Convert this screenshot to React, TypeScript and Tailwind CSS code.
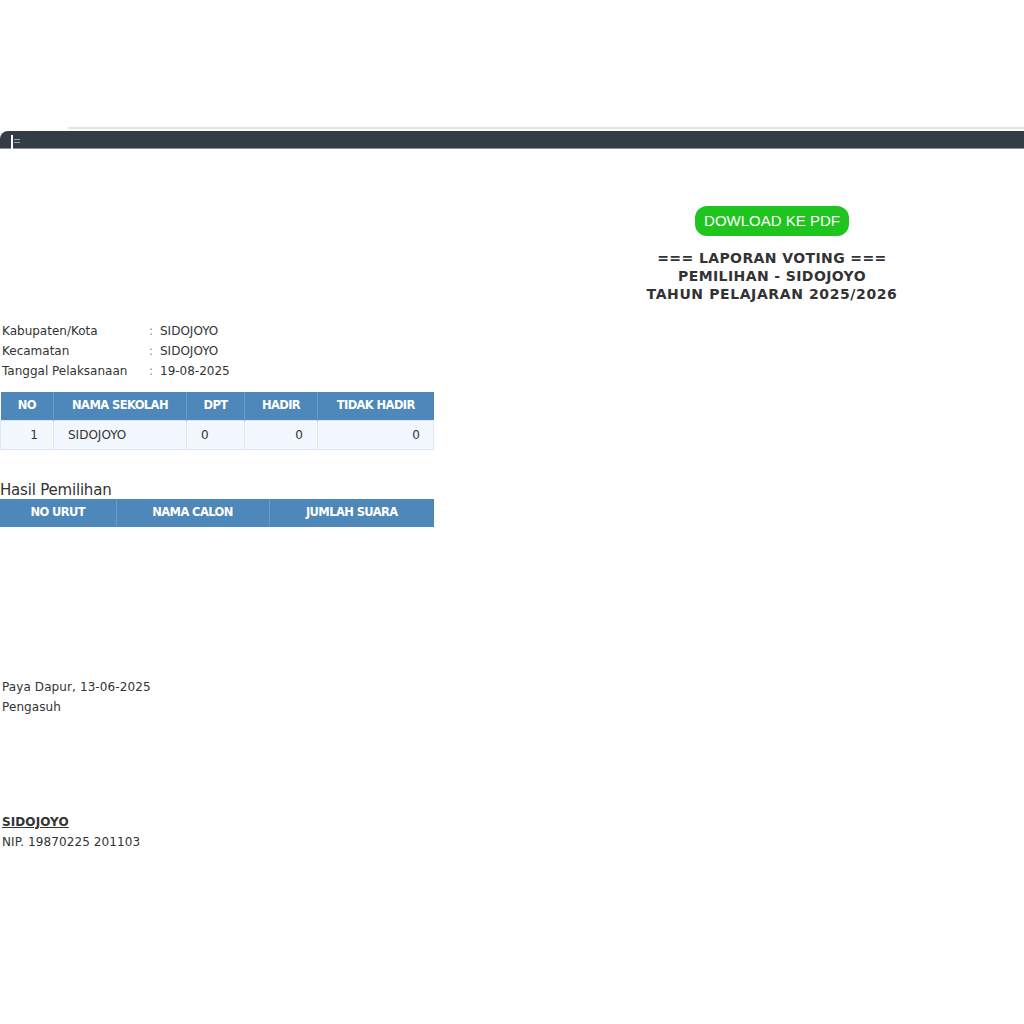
import React from "react";

const th = "border-r border-[#6b9bc6] last:border-r-0 text-white font-bold text-[11.5px] tracking-[-0.6px] text-center h-[28px]";
const td = "border border-[#dbe7f3] h-[29px] text-[12px] text-[#333]";

export default function App() {
  return (
    <div className="w-[1024px] min-h-[1024px] bg-white text-[#333]" style={{ fontFamily: '"DejaVu Sans", Verdana, sans-serif' }}>
      <div className="h-[127px]" />
      <div className="h-[2px] ml-[68px] bg-[#e4e4e4]" />
      <div className="h-[2px]" />
      <div className="relative h-[18px] bg-[#343d46] rounded-tl-[8px] border-b border-[#8a9096]">
        <div className="absolute left-[11px] top-[4px] w-[2px] h-[14px] bg-white" />
        <div className="absolute left-[14px] top-[8px] w-[6px] h-[1px] bg-[#9aa0a0]" />
        <div className="absolute left-[14px] top-[11px] w-[6px] h-[1px] bg-[#9aa0a0]" />
      </div>

      <div className="grid grid-cols-2">
        <div />
        <div className="flex flex-col items-center pt-[57px] pl-[8px]">
          <div
            className="h-[30px] px-[9px] flex items-center rounded-[12px] bg-[#1fc41f] text-white text-[15px]"
            style={{ fontFamily: '"Liberation Sans", Arial, sans-serif' }}
          >
            DOWLOAD KE PDF
          </div>
          <div className="mt-[13px] text-center font-bold text-[14px] leading-[18px] tracking-[0.4px] text-[#333]">
            <div>=== LAPORAN VOTING ===</div>
            <div>PEMILIHAN - SIDOJOYO</div>
            <div className="tracking-[0.6px]">TAHUN PELAJARAN 2025/2026</div>
          </div>
        </div>
      </div>

      <div className="mt-[18px] pl-[2px] text-[12px] leading-[20px]">
        <div className="flex"><span className="w-[147px]">Kabupaten/Kota</span><span className="w-[11px] text-[#888]">:</span><span>SIDOJOYO</span></div>
        <div className="flex"><span className="w-[147px]">Kecamatan</span><span className="w-[11px] text-[#888]">:</span><span>SIDOJOYO</span></div>
        <div className="flex"><span className="w-[147px]">Tanggal Pelaksanaan</span><span className="w-[11px] text-[#888]">:</span><span>19-08-2025</span></div>
      </div>

      <table className="mt-[11px] w-[434px] border-collapse">
        <thead>
          <tr className="bg-[#4e87b9]">
            <th className={`${th} w-[53px]`}>NO</th>
            <th className={`${th} w-[133px]`}>NAMA SEKOLAH</th>
            <th className={`${th} w-[58px]`}>DPT</th>
            <th className={`${th} w-[73px]`}>HADIR</th>
            <th className={th}>TIDAK HADIR</th>
          </tr>
        </thead>
        <tbody>
          <tr className="bg-[#f2f8fe]">
            <td className={`${td} text-right pr-[15px]`}>1</td>
            <td className={`${td} text-left pl-[14px]`}>SIDOJOYO</td>
            <td className={`${td} text-left pl-[14px]`}>0</td>
            <td className={`${td} text-right pr-[14px]`}>0</td>
            <td className={`${td} text-right pr-[13px]`}>0</td>
          </tr>
        </tbody>
      </table>

      <div className="mt-[31px] text-[15px] leading-[18px] tracking-[-0.2px] text-[#333]">Hasil Pemilihan</div>
      <table className="w-[434px] border-collapse">
        <thead>
          <tr className="bg-[#4e87b9]">
            <th className={`${th} w-[116px]`}>NO URUT</th>
            <th className={`${th} w-[153px]`}>NAMA CALON</th>
            <th className={th}>JUMLAH SUARA</th>
          </tr>
        </thead>
      </table>

      <div className="mt-[150px] pl-[2px] text-[12px] leading-[20px] tracking-[0.1px]">
        <div>Paya Dapur, 13-06-2025</div>
        <div>Pengasuh</div>
        <div className="h-[95px]" />
        <div className="font-bold underline">SIDOJOYO</div>
        <div>NIP. 19870225 201103</div>
      </div>
    </div>
  );
}
